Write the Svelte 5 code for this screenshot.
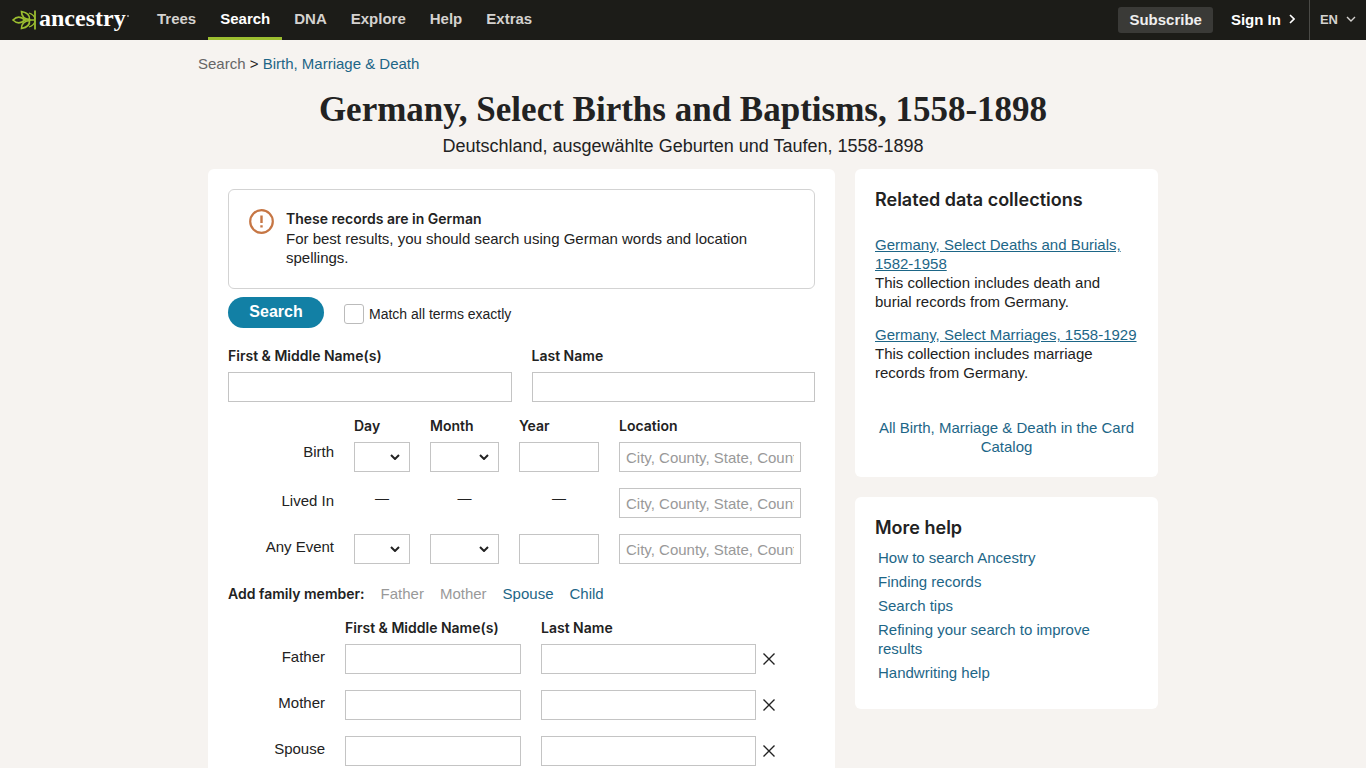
<script lang="ts">
	interface Link {
		label: string;
		href: string;
	}

	const nav: Link[] = [
		{ label: 'Trees', href: '#trees' },
		{ label: 'Search', href: '#search' },
		{ label: 'DNA', href: '#dna' },
		{ label: 'Explore', href: '#explore' },
		{ label: 'Help', href: '#help' },
		{ label: 'Extras', href: '#extras' }
	];

	const events = [
		{ id: 'birth', label: 'Birth', dated: true },
		{ id: 'lived', label: 'Lived In', dated: false },
		{ id: 'any', label: 'Any Event', dated: true }
	];

	const days = Array.from({ length: 31 }, (_, i) => i + 1);
	const months = ['Jan', 'Feb', 'Mar', 'Apr', 'May', 'Jun', 'Jul', 'Aug', 'Sep', 'Oct', 'Nov', 'Dec'];

	const memberTypes = [
		{ label: 'Father', single: true },
		{ label: 'Mother', single: true },
		{ label: 'Spouse', single: false },
		{ label: 'Child', single: false }
	];

	const collections = [
		{
			title: 'Germany, Select Deaths and Burials, 1582-1958',
			text: 'This collection includes death and burial records from Germany.'
		},
		{
			title: 'Germany, Select Marriages, 1558-1929',
			text: 'This collection includes marriage records from Germany.'
		}
	];

	const helpLinks = [
		'How to search Ancestry',
		'Finding records',
		'Search tips',
		'Refining your search to improve results',
		'Handwriting help'
	];

	let nextId = 4;
	let family = $state([
		{ id: 1, role: 'Father' },
		{ id: 2, role: 'Mother' },
		{ id: 3, role: 'Spouse' }
	]);
	let exact = $state(false);

	function isTaken(type: { label: string; single: boolean }) {
		return type.single && family.some((m) => m.role === type.label);
	}

	function addMember(role: string) {
		family.push({ id: nextId++, role });
	}

	function removeMember(id: number) {
		family = family.filter((m) => m.id !== id);
	}
</script>

<header class="topbar">
	<a class="logo" href="#home" aria-label="Ancestry home">
		<svg width="24" height="20" viewBox="0 0 24 20" fill="none" stroke="#9cbe30" stroke-width="1.7">
			<path d="M23 0.500v19" stroke-width="1.800" />
			<path d="M1 10C4.500 6.500 9 6.500 13 10C9 13.500 4.500 13.500 1 10Z" />
			<path d="M9.500 1.500C15 2.500 18 5 17.500 9.500C12.500 9 9.500 6 9.500 1.500Z" />
			<path d="M9.500 18.500C15 17.500 18 15 17.500 10.500C12.500 11 9.500 14 9.500 18.500Z" />
			<path d="M17 3C20 4 22.500 6 23 9M17 17C20 16 22.500 14 23 11M13 10h10" stroke-width="1.300" />
		</svg>
		<span>ancestry</span>
		<svg class="mark" width="2" height="2" viewBox="0 0 2 2" fill="#aaa"><circle cx="1" cy="1" r="1" /></svg>
	</a>
	<nav class="nav">
		{#each nav as item}
			<a href={item.href} class:active={item.label === 'Search'}>{item.label}</a>
		{/each}
	</nav>
	<div class="account">
		<button type="button" class="subscribe">Subscribe</button>
		<a class="signin" href="#signin">
			Sign In
			<svg width="6" height="10" viewBox="0 0 6 10" fill="none" stroke="#fff" stroke-width="1.6">
				<path d="M1 1l4 4-4 4" />
			</svg>
		</a>
		<button type="button" class="lang">
			EN
			<svg width="10" height="6" viewBox="0 0 10 6" fill="none" stroke="currentColor" stroke-width="1.4">
				<path d="M1 1l4 4 4-4" />
			</svg>
		</button>
	</div>
</header>

<main class="page">
	<nav class="crumbs" aria-label="Breadcrumb">
		<a class="crumb-root" href="#search">Search</a> &gt; <a href="#bmd">Birth, Marriage &amp; Death</a>
	</nav>
	<h1>Germany, Select Births and Baptisms, 1558-1898</h1>
	<p class="subtitle">Deutschland, ausgewählte Geburten und Taufen, 1558-1898</p>

	<div class="columns">
		<form class="card" onsubmit={(e) => e.preventDefault()}>
			<div class="notice">
				<svg width="25" height="25" viewBox="0 0 25 25" fill="none" stroke="#c67644">
					<circle cx="12.500" cy="12.500" r="11.300" stroke-width="2.200" />
					<path d="M12.500 6.500v7.500M12.500 16.200v2.200" stroke-width="2.400" />
				</svg>
				<div>
					<strong>These records are in German</strong>
					<p>For best results, you should search using German words and location spellings.</p>
				</div>
			</div>

			<div class="actions">
				<button type="submit" class="search-btn">Search</button>
				<label class="exact">
					<input type="checkbox" bind:checked={exact} />
					Match all terms exactly
				</label>
			</div>

			<div class="names">
				<label>First &amp; Middle Name(s)<input type="text" /></label>
				<label>Last Name<input type="text" /></label>
			</div>

			<div class="events">
				<div class="event head">
					<span></span>
					<span>Day</span>
					<span>Month</span>
					<span>Year</span>
					<span>Location</span>
				</div>
				{#each events as ev, i}
					<div class="event" class:first={i === 0}>
						<label class="row-label" for="{ev.id}-place">{ev.label}</label>
						{#if ev.dated}
							<select aria-label="{ev.label} day">
								<option value=""></option>
								{#each days as d}<option>{d}</option>{/each}
							</select>
							<select aria-label="{ev.label} month">
								<option value=""></option>
								{#each months as m}<option>{m}</option>{/each}
							</select>
							<input type="text" aria-label="{ev.label} year" />
						{:else}
							<span class="dash">—</span>
							<span class="dash">—</span>
							<span class="dash">—</span>
						{/if}
						<input id="{ev.id}-place" type="text" placeholder="City, County, State, Country" />
					</div>
				{/each}
			</div>

			<div class="add">
				<strong>Add family member:</strong>
				{#each memberTypes as type}
					<button type="button" disabled={isTaken(type)} onclick={() => addMember(type.label)}>
						{type.label}
					</button>
				{/each}
			</div>

			<div class="family">
				<div class="member head">
					<span></span>
					<span>First &amp; Middle Name(s)</span>
					<span>Last Name</span>
				</div>
				{#each family as m (m.id)}
					<div class="member">
						<label class="row-label" for="first-{m.id}">{m.role}</label>
						<input id="first-{m.id}" type="text" />
						<div class="last">
							<input type="text" aria-label="{m.role} last name" />
							<button type="button" aria-label="Remove {m.role}" onclick={() => removeMember(m.id)}>
								<svg width="12" height="12" viewBox="0 0 12 12" stroke="#222" stroke-width="1.400">
									<path d="M0.500 0.500l11 11M11.500 0.500l-11 11" />
								</svg>
							</button>
						</div>
					</div>
				{/each}
			</div>
		</form>

		<aside>
			<section class="card">
				<h2>Related data collections</h2>
				<div class="collections">
					{#each collections as c}
						<p><a href="#collection">{c.title}</a><br />{c.text}</p>
					{/each}
				</div>
				<a class="catalog" href="#catalog">All Birth, Marriage &amp; Death in the Card Catalog</a>
			</section>
			<section class="card">
				<h2>More help</h2>
				<ul>
					{#each helpLinks as link}
						<li><a href="#help">{link}</a></li>
					{/each}
				</ul>
			</section>
		</aside>
	</div>
</main>

<style>
	:global(body) {
		margin: 0;
		background: #f6f3f0;
		color: #222;
		font: 15px/19px 'Liberation Sans', Arial, sans-serif;
	}
	a {
		color: #1d6687;
		text-decoration: none;
	}
	h1,
	h2,
	p,
	ul {
		margin: 0;
		padding: 0;
	}
	button {
		padding: 0;
		border: 0;
		background: none;
		color: inherit;
		font: inherit;
		cursor: pointer;
	}
	.topbar {
		display: flex;
		height: 40px;
		background: #1c1c18;
		color: #fff;
		font-weight: bold;
	}
	.logo {
		display: flex;
		align-items: center;
		gap: 3px;
		box-sizing: border-box;
		width: 145px;
		padding-left: 12px;
		color: #fff;
		font: bold 24px/28px 'Liberation Serif', serif;
	}
	.logo span {
		padding-bottom: 4px;
	}
	.mark {
		margin: 0 0 8px -2px;
	}
	.nav {
		display: flex;
	}
	.nav a {
		box-sizing: border-box;
		height: 40px;
		padding: 9px 12px;
		border-bottom: 3px solid transparent;
		color: #d4d2cf;
	}
	.nav a.active {
		border-color: #9cbe30;
		color: #fff;
	}
	.account {
		display: flex;
		align-items: center;
		margin-left: auto;
	}
	.subscribe {
		height: 26px;
		padding: 0 11px 2px;
		border-radius: 3px;
		background: #3a3a37;
		color: #eee;
	}
	.signin {
		display: flex;
		align-items: center;
		gap: 8px;
		padding: 0 14px 2px 18px;
		color: #fff;
	}
	.lang {
		display: flex;
		align-items: center;
		gap: 8px;
		height: 40px;
		padding: 0 10px 2px;
		border-left: 1px solid #4a4a46;
		color: #d4d2cf;
		font-size: 13px;
	}
	.page {
		max-width: 970px;
		margin: 0 auto;
		padding-top: 14px;
	}
	.crumb-root {
		color: #666;
	}
	h1 {
		margin-top: 16px;
		font: bold 35px/42px 'Liberation Serif', serif;
		text-align: center;
	}
	.subtitle {
		margin-top: 3px;
		font-size: 18px;
		line-height: 24px;
		text-align: center;
	}
	.columns {
		display: grid;
		grid-template-columns: 627fr 303fr;
		align-items: start;
		gap: 20px;
		padding: 11px 10px 0;
	}
	.card {
		padding: 20px;
		border-radius: 6px;
		background: #fff;
	}
	strong,
	.names label,
	.head {
		font: 600 14px/19px Inter, sans-serif;
	}
	.notice {
		display: flex;
		align-items: flex-start;
		gap: 12px;
		padding: 19px 20px 21px;
		border: 1px solid #d3d3d3;
		border-radius: 6px;
	}
	.notice svg {
		flex: none;
	}
	.notice strong {
		display: block;
		margin-bottom: 1px;
	}
	.actions {
		display: flex;
		align-items: center;
		gap: 20px;
		margin-top: 8px;
	}
	.search-btn {
		width: 96px;
		height: 31px;
		padding-bottom: 2px;
		border-radius: 16px;
		background: #1280a5;
		color: #fff;
		font-size: 16px;
		font-weight: bold;
	}
	.exact {
		display: flex;
		align-items: center;
		gap: 5px;
		padding-top: 3px;
		font-size: 14px;
	}
	.exact input {
		box-sizing: border-box;
		appearance: none;
		width: 20px;
		height: 20px;
		margin: 0;
		border: 1px solid #bbb;
		border-radius: 3px;
	}
	.exact input:checked {
		background: #1280a5;
	}
	input[type='text'],
	select {
		box-sizing: border-box;
		width: 100%;
		height: 30px;
		margin: 0;
		padding: 0 6px;
		border: 1px solid #c4c4c4;
		border-radius: 0;
		background: #fff;
		color: #222;
		font: inherit;
	}
	select {
		appearance: none;
		background: #fff
			url("data:image/svg+xml,%3Csvg xmlns='http://www.w3.org/2000/svg' width='10' height='6' fill='none' stroke='%23222' stroke-width='2'%3E%3Cpath d='M1 1l4 4 4-4'/%3E%3C/svg%3E")
			no-repeat right 9px center;
	}
	input::placeholder {
		color: #999;
	}
	.names {
		display: grid;
		grid-template-columns: 1fr 1fr;
		gap: 20px;
		margin-top: 18px;
	}
	.names label {
		display: grid;
		gap: 7px;
	}
	.event {
		display: grid;
		grid-template-columns: 106px 56px 69px 80px 182px;
		align-items: center;
		column-gap: 20px;
		margin-bottom: 16px;
	}
	.event.first {
		align-items: start;
	}
	.row-label {
		padding-bottom: 6px;
		text-align: right;
	}
	.event.head,
	.member.head {
		margin-bottom: 7px;
	}
	.events {
		margin-top: 14px;
	}
	.dash {
		padding-bottom: 10px;
		font-size: 14px;
		text-align: center;
	}
	.add {
		display: flex;
		gap: 16px;
		margin-top: 20px;
	}
	.add button {
		color: #1d6687;
	}
	.add button:disabled {
		color: #999;
		cursor: default;
	}
	.family {
		margin-top: 15px;
	}
	.member {
		display: grid;
		grid-template-columns: 97px 176px 1fr;
		align-items: center;
		column-gap: 20px;
		margin-bottom: 16px;
	}
	.last {
		display: flex;
		align-items: center;
		gap: 7px;
	}
	.last input[type='text'] {
		width: 215px;
	}
	.last svg {
		display: block;
	}
	aside {
		display: grid;
		gap: 20px;
	}
	h2 {
		font: 600 18px/22px Inter, sans-serif;
	}
	.collections {
		display: grid;
		gap: 14px;
		margin-top: 24px;
	}
	.collections a {
		text-decoration: underline;
	}
	.catalog {
		display: block;
		margin: 36px 0 1px;
		text-align: center;
	}
	ul {
		display: grid;
		gap: 5px;
		margin-top: 9px;
		padding: 0 0 7px 3px;
		list-style: none;
	}
</style>
